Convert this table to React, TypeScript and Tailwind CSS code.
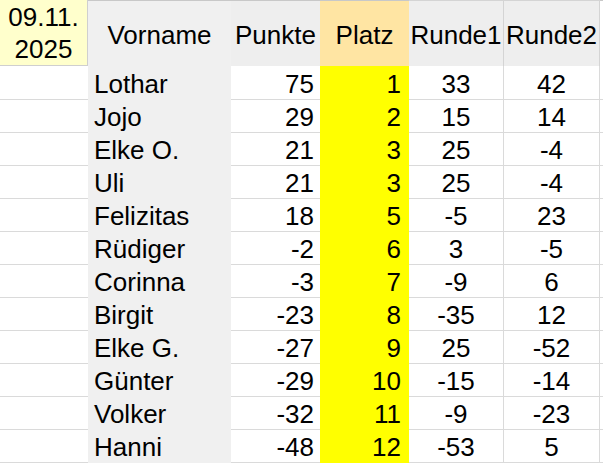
import React from "react";

const rows: [string, number, number, number, number][] = [
  ["Lothar", 75, 1, 33, 42],
  ["Jojo", 29, 2, 15, 14],
  ["Elke O.", 21, 3, 25, -4],
  ["Uli", 21, 3, 25, -4],
  ["Felizitas", 18, 5, -5, 23],
  ["Rüdiger", -2, 6, 3, -5],
  ["Corinna", -3, 7, -9, 6],
  ["Birgit", -23, 8, -35, 12],
  ["Elke G.", -27, 9, 25, -52],
  ["Günter", -29, 10, -15, -14],
  ["Volker", -32, 11, -9, -23],
  ["Hanni", -48, 12, -53, 5],
];

const cols = "grid grid-cols-[88px_143px_89px_89px_95px_96px_3px]";

export default function App() {
  return (
    <div
      className="w-[603px] h-[463px] overflow-hidden bg-white text-black text-[26px]"
      style={{ fontFamily: '"Liberation Sans", Arial, sans-serif' }}
    >
      <div className={`${cols} h-[66px]`}>
        <div className="h-[66px] bg-[#FFFFCC] border-r border-b border-[#cfcfcf] flex flex-col items-center justify-center leading-[32px]">
          <span>09.11.</span>
          <span>2025</span>
        </div>
        <div className="bg-[#F0F0F0] border-t border-[#c8c8c8] flex items-center justify-center pt-[3px]">Vorname</div>
        <div className="bg-[#EEEEEE] border-t border-[#c8c8c8] flex items-center justify-center pt-[3px]">Punkte</div>
        <div className="bg-[#FFE5A3] border-t border-[#c8c8c8] flex items-center justify-center pt-[3px]">Platz</div>
        <div className="bg-[#EEEEEE] border-t border-r border-[#d4d4d4] flex items-center justify-center pt-[3px]">Runde1</div>
        <div className="bg-[#EEEEEE] border-t border-r border-[#d4d4d4] flex items-center justify-center pt-[3px]">Runde2</div>
        <div className="border-t border-[#c8c8c8]"></div>
      </div>
      {rows.map(([name, p, pl, r1, r2]) => (
        <div key={name} className={`${cols} h-[33px] leading-[29px]`}>
          <div className="border-b border-[#dadada]"></div>
          <div className="bg-[#F0F0F0] pl-[6px] pt-[4px]">{name}</div>
          <div className="border-b border-[#dadada] text-right pr-[6px] pt-[4px]">{p}</div>
          <div className="bg-[#FFFF00] text-right pr-[8px] pt-[4px]">{pl}</div>
          <div className="border-b border-r border-[#dadada] text-center pt-[4px]">{r1}</div>
          <div className="border-b border-r border-[#dadada] text-center pt-[4px]">{r2}</div>
          <div className="border-b border-[#dadada]"></div>
        </div>
      ))}
    </div>
  );
}
